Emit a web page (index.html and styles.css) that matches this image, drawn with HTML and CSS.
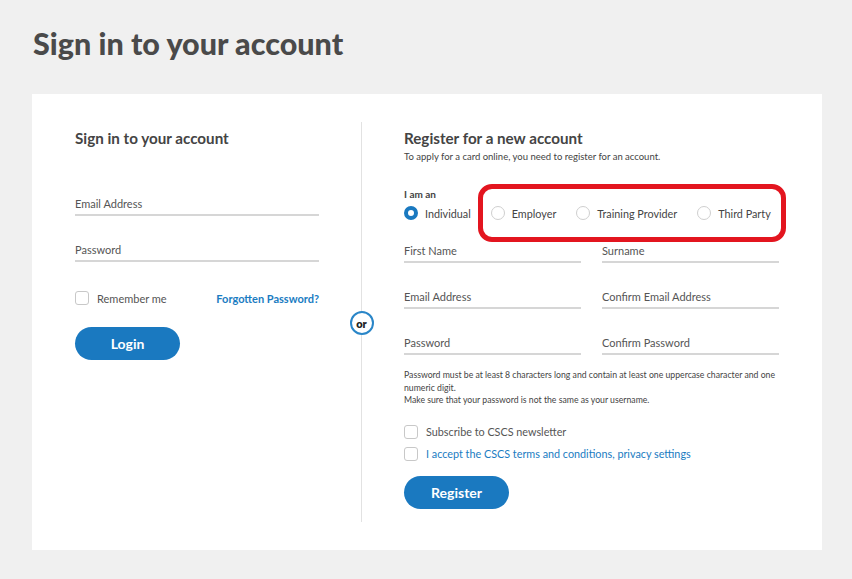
FILE: index.html
```html
<!DOCTYPE html>
<html lang="en">
<head>
    <meta charset="UTF-8">
    <meta name="viewport" content="width=device-width, initial-scale=1.0">
    <title>Sign in to your account</title>
    <link rel="stylesheet" href="styles.css">
</head>
<body>
    <h1 class="page-title">Sign in to your account</h1>
    <div class="card">
        <div class="login-col">
            <h2 class="col-title">Sign in to your account</h2>
            <div class="field first">Email Address</div>
            <div class="field">Password</div>
            <div class="remember-row">
                <label class="check"><span class="box"></span>Remember me</label>
                <a class="forgot" href="#">Forgotten Password?</a>
            </div>
            <div class="btn">Login</div>
        </div>
        <div class="divider">
            <div class="or">or</div>
        </div>
        <div class="register-col">
            <h2 class="col-title">Register for a new account</h2>
            <div class="sub">To apply for a card online, you need to register for an account.</div>
            <div class="iam">I am an</div>
            <div class="radios">
                <label class="radio"><span class="dot checked"></span>Individual</label>
                <label class="radio"><span class="dot"></span>Employer</label>
                <label class="radio"><span class="dot"></span>Training Provider</label>
                <label class="radio"><span class="dot"></span>Third Party</label>
                <div class="highlight"></div>
            </div>
            <div class="fields">
                <div class="field">First Name</div>
                <div class="field">Surname</div>
                <div class="field">Email Address</div>
                <div class="field">Confirm Email Address</div>
                <div class="field">Password</div>
                <div class="field">Confirm Password</div>
            </div>
            <div class="help">
                Password must be at least 8 characters long and contain at least one uppercase character and one numeric digit.<br>
                Make sure that your password is not the same as your username.
            </div>
            <label class="check reg-check"><span class="box"></span>Subscribe to CSCS newsletter</label>
            <label class="check reg-check terms"><span class="box"></span><a href="#">I accept the CSCS terms and conditions, privacy settings</a></label>
            <div class="btn register">Register</div>
        </div>
    </div>
</body>
</html>
```

FILE: styles.css
```css
* {
    margin: 0;
    padding: 0;
    box-sizing: border-box;
}
body {
    background: #f0f0f0;
    font-family: Lato, "Open Sans", sans-serif;
    color: #444;
}
a {
    text-decoration: none;
}
.page-title {
    font-size: 30.5px;
    font-weight: 900;
    color: #4a4a4a;
    line-height: 36px;
    padding: 25px 0 0 33px;
    height: 94px;
}
.card {
    display: flex;
    width: 790px;
    margin-left: 32px;
    background: #ffffff;
    padding: 28px 36px 28px 43px;
    height: 456px;
}
.login-col {
    width: 244px;
    flex-shrink: 0;
}
.col-title {
    font-size: 15.2px;
    font-weight: 700;
    line-height: 20px;
    color: #444;
    margin-top: 6px;
}
.field {
    font-size: 11px;
    line-height: 14px;
    color: #555;
    padding-bottom: 3px;
    border-bottom: 2px solid #d6d6d6;
    margin-top: 27px;
}
.field.first {
    margin-top: 49px;
}
.remember-row {
    display: flex;
    justify-content: space-between;
    align-items: center;
    margin-top: 28px;
    height: 16px;
}
.check {
    display: flex;
    align-items: center;
    font-size: 11px;
    color: #555;
}
.box {
    width: 14px;
    height: 14px;
    border: 1px solid #c8c8c8;
    border-radius: 3px;
    margin-right: 8px;
}
.forgot {
    font-size: 11px;
    font-weight: 700;
    color: #1a7cc2;
}
.btn {
    width: 105px;
    height: 33px;
    border-radius: 17px;
    background: #1a79c0;
    color: #ffffff;
    font-size: 14px;
    font-weight: 700;
    display: flex;
    align-items: center;
    justify-content: center;
    margin-top: 21px;
}
.divider {
    width: 85px;
    flex-shrink: 0;
    display: flex;
    justify-content: center;
    align-items: center;
    background: linear-gradient(#e2e2e2, #e2e2e2) center / 1px 100% no-repeat;
}
.or {
    width: 24px;
    height: 24px;
    border: 2px solid #2a86c8;
    border-radius: 50%;
    background: #ffffff;
    font-size: 11px;
    font-weight: 800;
    color: #222;
    display: flex;
    align-items: center;
    justify-content: center;
    line-height: 1;
    margin-top: 2px;
}
.register-col {
    flex: 1;
    min-width: 0;
}
.sub {
    font-size: 9.5px;
    line-height: 14px;
    color: #444;
    margin-top: 2px;
}
.iam {
    font-size: 10px;
    font-weight: 700;
    line-height: 14px;
    margin-top: 23px;
}
.radios {
    position: relative;
    display: flex;
    gap: 20px;
    height: 16px;
    margin-top: 4px;
}
.radio {
    display: flex;
    align-items: center;
    font-size: 10.8px;
    color: #444;
}
.dot {
    width: 14px;
    height: 14px;
    border: 1px solid #cfcfcf;
    border-radius: 50%;
    margin-right: 7px;
}
.dot.checked {
    border: 4px solid #1a79c0;
}
.highlight {
    position: absolute;
    left: 74px;
    top: -21px;
    width: 308px;
    height: 58px;
    border: 5px solid #e3151f;
    border-radius: 14px;
}
.fields {
    display: grid;
    grid-template-columns: 177px 177px;
    column-gap: 21px;
    row-gap: 27px;
    margin-top: 23px;
}
.fields .field {
    margin-top: 0;
}
.help {
    font-size: 8.7px;
    line-height: 12.5px;
    color: #444;
    margin-top: 14px;
}
.reg-check {
    height: 16px;
    margin-top: 17px;
    font-size: 10.8px;
}
.reg-check.terms {
    margin-top: 6px;
}
.terms a {
    color: #1a7cc2;
}
.btn.register {
    margin-top: 14px;
}
```
